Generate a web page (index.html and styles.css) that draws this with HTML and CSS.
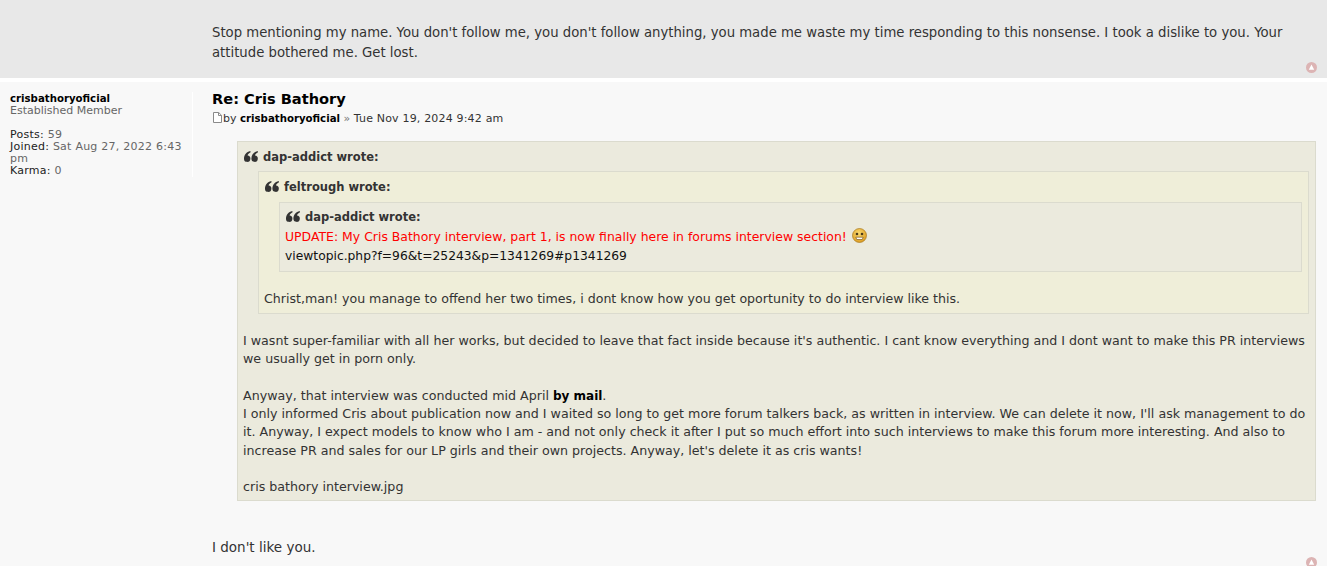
FILE: index.html
```html
<!DOCTYPE html>
<html lang="en">
<head>
<meta charset="utf-8">
<title>Re: Cris Bathory</title>
<link rel="stylesheet" href="styles.css">
</head>
<body>
<svg class="defs" width="0" height="0" aria-hidden="true"><symbol id="qm" viewBox="0 0 14 11"><path d="M6.300 0C2.500 1 0 3.800 0 7.600a3.200 3.200 0 1 0 3.600-3.100C3.800 3 5 2 6.600 1.200zM13.700 0C9.900 1 7.400 3.800 7.400 7.600a3.200 3.200 0 1 0 3.600-3.100C11.200 3 12.400 2 14 1.200z" fill="#333"/></symbol></svg>
<main class="page">
  <article class="post post-prev">
    <div class="post-main">
      <div class="content">Stop mentioning my name. You don't follow me, you don't follow anything, you made me waste my time responding to this nonsense. I took a dislike to you. Your attitude bothered me. Get lost.</div>
    </div>
    <a class="top-link" href="#" aria-label="Top"><svg viewBox="0 0 11 11" width="11" height="11"><circle cx="5.5" cy="5.5" r="5.5" fill="#dcb4b4"/><path d="M5.5 2.6 8.2 7.8H2.8z" fill="#fff"/></svg></a>
  </article>
  <article class="post post-cur">
    <aside class="profile">
      <div class="author">crisbathoryoficial</div>
      <div class="rank">Established Member</div>
      <dl class="stats">
        <div><dt>Posts:</dt> <dd>59</dd></div>
        <div><dt>Joined:</dt> <dd>Sat Aug 27, 2022 6:43 pm</dd></div>
        <div><dt>Karma:</dt> <dd>0</dd></div>
      </dl>
    </aside>
    <div class="post-main">
      <h3 class="title">Re: Cris Bathory</h3>
      <p class="meta"><svg class="file" viewBox="0 0 9 11" width="9" height="11"><path d="M.5.5h5.2l2.8 2.8v7.200H.5z" fill="#fff" stroke="#8a8a8a"/><path d="M5.500.5v3h3" fill="none" stroke="#8a8a8a"/></svg><span class="by">by</span> <strong>crisbathoryoficial</strong> <span class="sep">»</span> <span class="date">Tue Nov 19, 2024 9:42 am</span></p>
      <div class="content">
        <blockquote class="quote q1">
          <cite><svg class="mark" width="14" height="11"><use href="#qm"/></svg>dap-addict wrote:</cite>
          <blockquote class="quote q2">
            <cite><svg class="mark" width="14" height="11"><use href="#qm"/></svg>feltrough wrote:</cite>
            <blockquote class="quote q3">
              <cite><svg class="mark" width="14" height="11"><use href="#qm"/></svg>dap-addict wrote:</cite>
              <div><span class="red">UPDATE: My Cris Bathory interview, part 1, is now finally here in forums interview section!</span> <svg class="smiley" viewBox="0 0 15 15" width="15" height="15"><defs><radialGradient id="s" cx=".45" cy=".35" r=".7"><stop offset="0" stop-color="#fbdc72"/><stop offset="1" stop-color="#d9961a"/></radialGradient></defs><circle cx="7.500" cy="7.500" r="7" fill="url(#s)" stroke="#a87a20" stroke-width=".7"/><circle cx="5" cy="6" r="1.300" fill="#4a3a1a"/><circle cx="10" cy="6" r="1.300" fill="#4a3a1a"/><path d="M3.800 9.200h7.400l-1 2.300H4.800z" fill="#fff" stroke="#6a4a10" stroke-width=".6"/></svg><br><span class="url">viewtopic.php?f=96&amp;t=25243&amp;p=1341269#p1341269</span></div>
            </blockquote>
            <div class="q2-text">Christ,man! you manage to offend her two times, i dont know how you get oportunity to do interview like this.</div>
          </blockquote>
          <div class="q1-text">I wasnt super-familiar with all her works, but decided to leave that fact inside because it's authentic. I cant know everything and I dont want to make this PR interviews we usually get in porn only.<br><br>Anyway, that interview was conducted mid April <strong class="black">by mail</strong>.<br>I only informed Cris about publication now and I waited so long to get more forum talkers back, as written in interview. We can delete it now, I'll ask management to do it. Anyway, I expect models to know who I am - and not only check it after I put so much effort into such interviews to make this forum more interesting. And also to increase PR and sales for our LP girls and their own projects. Anyway, let's delete it as cris wants!<br><br>cris bathory interview.jpg</div>
        </blockquote>
        <div class="reply">I don't like you.</div>
      </div>
    </div>
    <a class="top-link" href="#" aria-label="Top"><svg viewBox="0 0 11 11" width="11" height="11"><circle cx="5.5" cy="5.5" r="5.5" fill="#dcb4b4"/><path d="M5.5 2.6 8.2 7.8H2.8z" fill="#fff"/></svg></a>
  </article>
</main>
</body>
</html>
```
FILE: styles.css
```css
html, body { margin: 0; padding: 0; height: 566px; overflow: hidden; background: #fff; }
body { font-family: "DejaVu Sans", Verdana, sans-serif; color: #333; }
.defs { display: block; }
.page { width: 1327px; display: flex; flex-direction: column; gap: 4px; }
.post { position: relative; display: flex; }
.post-prev { background: #e8e8e8; height: 78px; box-sizing: border-box; padding: 23px 16px 0 212px; }
.post-cur { background: #f8f8f8; padding: 8px 11px 0 10px; min-height: 484px; box-sizing: border-box; }
.post-main { flex: 1; min-width: 0; }
.content { font-size: 13.24px; line-height: 20px; }
.profile { width: 184px; height: 85px; margin: 2px 18px 0 -1px; padding: 1px 6px 0 1px; flex: none; box-sizing: border-box; border-right: 1px solid #fff; font-size: 11px; line-height: 12px; color: #666; }
.author { font-weight: bold; font-size: 10.2px; color: #000; }
.stats { margin: 12px 0 0; letter-spacing: .24px; }
.stats dt, .stats dd { display: inline; margin: 0; }
.stats dt { color: #222; }
.title { margin: 0 0 0 1px; font-size: 14.6px; line-height: 17px; font-weight: bold; color: #000; }
.meta { margin: 4px 0 0 1px; font-size: 11px; line-height: 16px; color: #333; }
.meta strong { font-size: 10.2px; color: #000; }
.date { letter-spacing: .18px; }
.file { vertical-align: -1px; margin: 0 1px 0 1px; }
.by { color: #333; }
.sep { color: #777; }
.quote { margin: 0; padding: 5px; border: 1px solid #dbdbce; background: #ebeadd; font-size: 12.45px; line-height: 18.25px; }
.q1 { margin: 14px 0 0 26px; padding-bottom: 4px; }
.q1-text { font-size: 12.65px; }
.q2 { background: #efeed9; margin: 4px 1px 18px 15px; }
.q3 { background: #ebeadd; margin: 5px 1px 18px 15px; padding-top: 4px; line-height: 19px; }
.q2-text { font-size: 12.6px; line-height: 18px; }
cite { display: block; font-style: normal; font-weight: bold; font-size: 11.5px; line-height: 20px; color: #333; }
.mark { margin: 0 5px 0 1px; vertical-align: -1px; }
.red { color: #f00; }
.url { font-size: 12.3px; color: #111; }
.black { font-size: 12px; color: #000; }
.smiley { vertical-align: 0; margin: -6px 0 -2px 1px; }
.reply { margin: 36px 0 0 1px; font-size: 13.5px; }
.top-link { position: absolute; right: 10px; bottom: 5px; line-height: 0; }
.post-cur .top-link { bottom: -2px; }
```
